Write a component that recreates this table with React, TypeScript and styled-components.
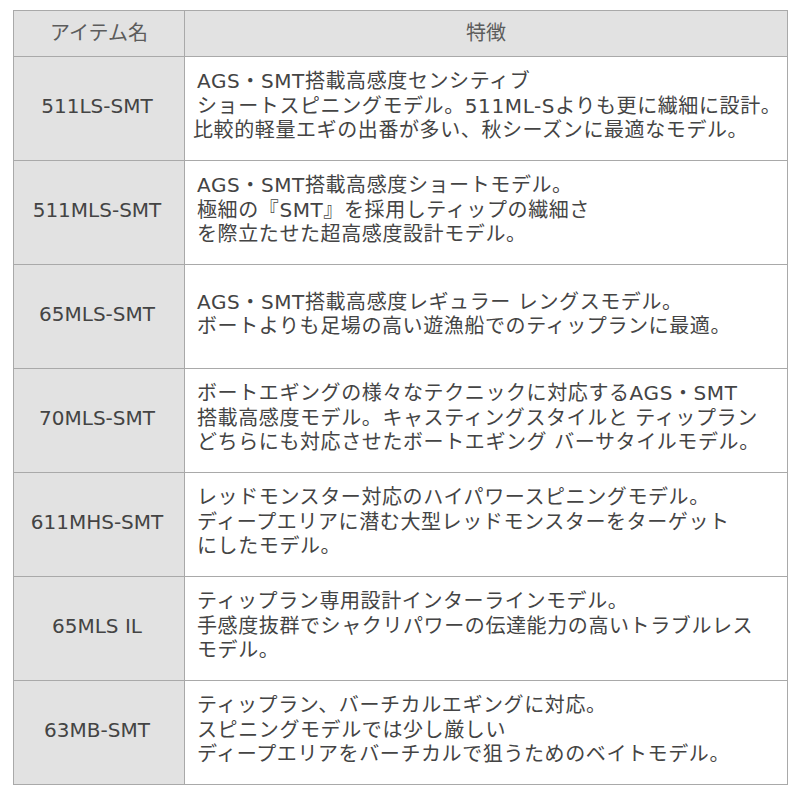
import React from "react";
import styled, { createGlobalStyle } from "styled-components";

const Global = createGlobalStyle`
  html, body { margin: 0; padding: 0; background: #ffffff; }
  body { font-family: "DejaVu Sans", "Noto Sans CJK JP", sans-serif; }
`;

const Page = styled.div`
  padding: 10px 0 0 13px;
`;

const Table = styled.div`
  display: grid;
  grid-template-columns: 171px 603px;
  grid-template-rows: 46px;
  grid-auto-rows: 104px;
  width: 775px;
  border-top: 1px solid #a9a9a9;
  border-left: 1px solid #a9a9a9;
  box-sizing: border-box;
  color: #444444;
  font-size: 20px;
  line-height: 24.5px;
`;

const Cell = styled.div<{ $head?: boolean; $name?: boolean }>`
  box-sizing: border-box;
  border-right: 1px solid #a9a9a9;
  border-bottom: 1px solid #a9a9a9;
  background: ${(p) => (p.$head || p.$name ? "#e2e2e2" : "#ffffff")};
  display: flex;
  align-items: center;
  justify-content: ${(p) => (p.$head || p.$name ? "center" : "flex-start")};
  color: ${(p) => (p.$head ? "#5c5c5c" : "#444444")};
  padding: ${(p) => (p.$head ? "0 0 1px 0" : p.$name ? "0 4px 4px 0" : "0 0 5px 12px")};
  letter-spacing: ${(p) => (p.$head || p.$name ? "0" : "0.6px")};
  white-space: nowrap;
  overflow: hidden;
`;

const Lines = styled.div`
  display: flex;
  flex-direction: column;
`;

const Line = styled.span<{ $shift?: number }>`
  display: block;
  margin-left: ${(p) => p.$shift ?? 0}px;
`;

type Row = { name: string; lines: { t: string; s?: number }[] };

const rows: Row[] = [
  {
    name: "511LS-SMT",
    lines: [
      { t: "AGS・SMT搭載高感度センシティブ" },
      { t: "ショートスピニングモデル。511ML-Sよりも更に繊細に設計。" },
      { t: "比較的軽量エギの出番が多い、秋シーズンに最適なモデル。", s: -4 },
    ],
  },
  {
    name: "511MLS-SMT",
    lines: [
      { t: "AGS・SMT搭載高感度ショートモデル。" },
      { t: "極細の『SMT』を採用しティップの繊細さ" },
      { t: "を際立たせた超高感度設計モデル。" },
    ],
  },
  {
    name: "65MLS-SMT",
    lines: [
      { t: "AGS・SMT搭載高感度レギュラー レングスモデル。" },
      { t: "ボートよりも足場の高い遊漁船でのティップランに最適。" },
    ],
  },
  {
    name: "70MLS-SMT",
    lines: [
      { t: "ボートエギングの様々なテクニックに対応するAGS・SMT" },
      { t: "搭載高感度モデル。キャスティングスタイルと ティップラン" },
      { t: "どちらにも対応させたボートエギング バーサタイルモデル。" },
    ],
  },
  {
    name: "611MHS-SMT",
    lines: [
      { t: "レッドモンスター対応のハイパワースピニングモデル。" },
      { t: "ディープエリアに潜む大型レッドモンスターをターゲット" },
      { t: "にしたモデル。" },
    ],
  },
  {
    name: "65MLS IL",
    lines: [
      { t: "ティップラン専用設計インターラインモデル。" },
      { t: "手感度抜群でシャクリパワーの伝達能力の高いトラブルレス" },
      { t: "モデル。" },
    ],
  },
  {
    name: "63MB-SMT",
    lines: [
      { t: "ティップラン、バーチカルエギングに対応。" },
      { t: "スピニングモデルでは少し厳しい" },
      { t: "ディープエリアをバーチカルで狙うためのベイトモデル。" },
    ],
  },
];

export default function App() {
  return (
    <>
      <Global />
      <Page>
        <Table>
          <Cell $head>アイテム名</Cell>
          <Cell $head>特徴</Cell>
          {rows.map((r) => (
            <React.Fragment key={r.name}>
              <Cell $name>{r.name}</Cell>
              <Cell>
                <Lines>
                  {r.lines.map((l, i) => (
                    <Line key={i} $shift={l.s}>
                      {l.t}
                    </Line>
                  ))}
                </Lines>
              </Cell>
            </React.Fragment>
          ))}
        </Table>
      </Page>
    </>
  );
}
